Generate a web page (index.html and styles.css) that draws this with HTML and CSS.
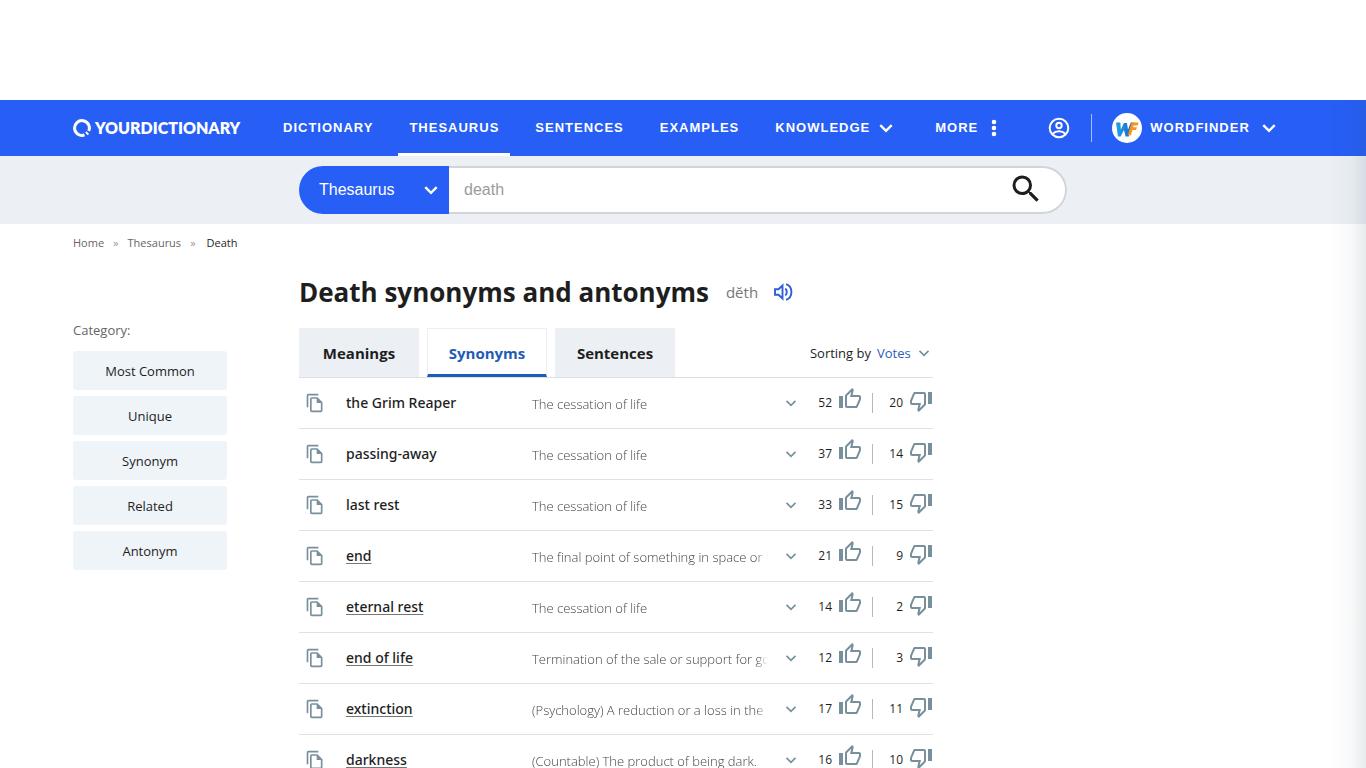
FILE: index.html
```html
<!DOCTYPE html>
<html lang="en">
<head>
<meta charset="utf-8">
<title>Death synonyms and antonyms</title>
<link rel="stylesheet" href="styles.css">
</head>
<body>
<svg class="sprite" aria-hidden="true">
  <symbol id="chevron" viewBox="0 0 14 14"><path d="M2 4.500l5 5 5-5" fill="none" stroke="currentColor" stroke-width="2.100"/></symbol>
  <symbol id="chevron-thin" viewBox="0 0 14 14"><path d="M2.500 4.800L7 9.300l4.500-4.500" fill="none" stroke="currentColor" stroke-width="1.700"/></symbol>
  <symbol id="copy" viewBox="0 0 24 24"><path fill="currentColor" fill-rule="evenodd" d="M16 1H4a2 2 0 0 0-2 2v14h2V3h12V1zM15 5l6 6v10a2 2 0 0 1-2 2H8a2 2 0 0 1-2-2V7a2 2 0 0 1 2-2h7zM8 7v14h11v-9h-5V7H8z"/></symbol>
  <symbol id="up" viewBox="0 0 24 24"><path fill="currentColor" fill-rule="evenodd" d="M9 21h9c.83 0 1.540-.5 1.840-1.220l3.020-7.050c.09-.23.14-.47.14-.73v-2c0-1.100-.9-2-2-2h-6.310l.95-4.570.03-.32c0-.41-.17-.79-.44-1.060L14.170 1 7.580 7.590C7.220 7.950 7 8.450 7 9v10c0 1.100.9 2 2 2zM9 9l4.340-4.340L12 10h9v2l-3 7H9V9zM1 9h4v12H1z"/></symbol>
  <symbol id="down" viewBox="0 0 24 24"><path fill="currentColor" fill-rule="evenodd" d="M15 3H6c-.83 0-1.540.5-1.840 1.220l-3.020 7.050c-.09.23-.14.47-.14.73v2c0 1.100.9 2 2 2h6.310l-.95 4.570-.03.32c0 .41.17.79.44 1.060L9.830 23l6.590-6.590c.36-.36.58-.86.58-1.410V5c0-1.100-.9-2-2-2zm0 12l-4.340 4.340L12 14H3v-2l3-7h9v10zm4-12h4v12h-4z"/></symbol>
</svg>

<div class="ad-slot"></div>

<header class="topbar">
  <div class="container topbar-inner">
    <a class="logo" href="#" aria-label="YourDictionary">
      <svg width="18" height="18" viewBox="0 0 18 18" aria-hidden="true"><path d="M11.500 15.900A7.400 7.400 0 1 1 15.700 12" fill="none" stroke="#fff" stroke-width="3"/><path d="M12.800 13l2.600 2.600" stroke="#fff" stroke-width="1.800"/></svg>
      <span>YOURDICTIONARY</span>
    </a>
    <nav class="nav">
      <a href="#">DICTIONARY</a>
      <a href="#" class="active">THESAURUS</a>
      <a href="#">SENTENCES</a>
      <a href="#">EXAMPLES</a>
      <button type="button">KNOWLEDGE <svg width="16" height="16"><use href="#chevron"/></svg></button>
      <button type="button" class="more">MORE <svg width="6" height="18" viewBox="0 0 6 18" fill="#fff"><circle cx="3" cy="3" r="2.300"/><circle cx="3" cy="9" r="2.300"/><circle cx="3" cy="15" r="2.300"/></svg></button>
    </nav>
    <div class="account">
      <button type="button" class="user" aria-label="Account"><svg width="22" height="22" viewBox="0 0 22 22" fill="none" stroke="#fff" stroke-width="2"><circle cx="11" cy="11" r="9.300"/><circle cx="11" cy="8.500" r="2.700"/><path d="M4.500 17c3.500-3.600 9.500-3.600 13 0"/></svg></button>
      <button type="button" class="wf">
        <svg width="30" height="30" viewBox="0 0 30 30"><defs><linearGradient id="w" x1="0" x2="1"><stop offset="0" stop-color="#1fa5e8"/><stop offset="1" stop-color="#1c62bd"/></linearGradient></defs><circle cx="15" cy="15" r="15" fill="#fff"/><path d="M4 9.500h4.300l.6 7 3-6.500h3l1.100 6.500 2.800-7h3.200l-5.200 14h-3.200l-1.700-6.500-3.200 6.500H5.900z" fill="url(#w)"/><path d="M19.500 9.500h7l-.8 3h-4.200l-.4 1.800h3.800l-.8 2.700h-3.700l-1.500 5.300h-3z" fill="#f8941d"/></svg>
        <span>WORDFINDER</span>
        <svg width="16" height="16"><use href="#chevron"/></svg>
      </button>
    </div>
  </div>
</header>

<div class="searchbar">
  <div class="container">
    <form class="search">
      <div class="scope">
        <select aria-label="Search in"><option>Thesaurus</option><option>Dictionary</option><option>Sentences</option></select>
        <svg width="16" height="16"><use href="#chevron"/></svg>
      </div>
      <input type="text" placeholder="death" aria-label="Search">
      <button type="button" aria-label="Search"><svg width="36" height="36" viewBox="0 0 24 24"><path fill="#1e1e1e" d="M15.500 14h-.79l-.28-.27A6.470 6.470 0 0 0 16 9.500 6.500 6.500 0 1 0 9.500 16c1.610 0 3.090-.59 4.230-1.570l.27.28v.79l5 4.990L20.490 19l-4.990-5zm-6 0a4.500 4.500 0 1 1 0-9 4.500 4.500 0 0 1 0 9z"/></svg></button>
    </form>
  </div>
</div>

<main class="container">
  <nav class="crumbs" aria-label="Breadcrumb"><a href="#">Home</a><i>»</i><a href="#">Thesaurus</a><i>»</i><span>Death</span></nav>
  <div class="columns">
    <aside class="side">
      <p>Category:</p>
      <button type="button">Most Common</button>
      <button type="button">Unique</button>
      <button type="button">Synonym</button>
      <button type="button">Related</button>
      <button type="button">Antonym</button>
    </aside>
    <section class="content">
      <div class="title">
        <h1>Death synonyms and antonyms</h1>
        <span class="pron">dĕth</span>
        <button type="button" aria-label="Listen"><svg width="20" height="20" viewBox="0 0 20 20" fill="none" stroke="#2f5fd6" stroke-width="1.900"><path d="M2 7.200h3.500l4-3.700v13l-4-3.700H2z"/><path d="M12.300 6.500c2 1.600 2 5.400 0 7M13 2.200c7.200 2.200 7.200 13.400 0 15.600"/></svg></button>
      </div>
      <div class="tabs">
        <a href="#">Meanings</a>
        <a href="#" class="active">Synonyms</a>
        <a href="#">Sentences</a>
        <div class="sort"><label for="sort">Sorting by</label><select id="sort"><option>Votes</option><option>A-Z</option></select><svg width="14" height="14"><use href="#chevron-thin"/></svg></div>
      </div>
      <ul class="rows" id="rows"></ul>
    </section>
  </div>
</main>
<script src="rows.js"></script>
</body>
</html>
```
FILE: styles.css
```css
* { box-sizing: border-box; }
body { margin: 0; background: #fff; color: #1e1e1e; font-family: "Open Sans", "Noto Sans", sans-serif; font-size: 13px; overflow: hidden; }
body::after { content: ""; position: fixed; top: 100px; right: 0; bottom: 0; width: 36px; pointer-events: none; background: linear-gradient(to right, rgba(60, 90, 100, 0), rgba(60, 90, 100, .04) 60%, rgba(60, 90, 100, .12)); }
a { color: inherit; text-decoration: none; }
button { padding: 0; border: 0; background: none; color: inherit; font: inherit; cursor: pointer; }
svg { display: block; flex: none; }
.sprite { position: absolute; width: 0; height: 0; }
.container { max-width: 1220px; margin: 0 auto; }
.ad-slot { height: 100px; }

.topbar { background: #265ef6; color: #fff; font: bold 13px/16px "Liberation Sans", Arial, sans-serif; }
.topbar-inner { display: flex; height: 56px; }
.logo { display: flex; align-items: center; gap: 4px; width: 199px; font: 800 16px/20px Lato, sans-serif; }
.nav { display: flex; gap: 14px; letter-spacing: 1px; }
.nav a, .nav button { display: flex; align-items: center; padding: 0 11px; letter-spacing: 1px; border-bottom: 3px solid transparent; border-top: 2px solid transparent; }
.nav .active { border-bottom-color: #fff; }
.nav button { gap: 8px; }
.nav .more { gap: 13px; margin-left: 5px; }
.account { display: flex; align-items: center; margin-left: 40px; }
.user { padding-right: 21px; border-right: 1px solid #a8bffb; height: 28px; }
.wf { display: flex; align-items: center; gap: 8px; margin-left: 20px; letter-spacing: 1px; }
.wf span { padding-right: 3px; }

.searchbar { background: #ecf0f5; padding: 10px 0; }
.search { display: flex; height: 48px; max-width: 768px; margin-left: 226px; border-radius: 24px; background: #fff; font: 16px/20px "Liberation Sans", Arial, sans-serif; }
.scope { display: grid; grid-template-columns: 1fr 26px; align-items: center; width: 150px; border-radius: 24px 0 0 24px; background: #265ef6; color: #fff; }
.scope select { grid-area: 1 / 1 / 2 / 3; height: 48px; padding: 0 20px; appearance: none; border: 0; background: none; color: inherit; font: inherit; }
.scope svg { grid-area: 1 / 2; pointer-events: none; }
.search input { flex: 1; min-width: 0; padding: 0 15px; border: solid #d0d5da; border-width: 2px 0; background: none; font: inherit; outline: 0; }
.search input::placeholder { color: #9b9b9b; }
.search button { display: flex; align-items: center; padding: 0 21px 2px 0; border: 2px solid #d0d5da; border-left: 0; border-radius: 0 24px 24px 0; }

.crumbs { display: flex; gap: 9px; padding-top: 10px; font-size: 11px; line-height: 18px; color: #666; }
.crumbs i { font-style: normal; color: #999; }
.crumbs span { color: #1e1e1e; margin-left: 2px; }
.columns { display: flex; gap: 72px; }
.side { display: flex; flex-direction: column; gap: 6px; width: 154px; padding-top: 68px; }
.side p { margin: 0 0 5px; line-height: 20px; color: #666; }
.side button { height: 39px; border-radius: 3px; background: #eff4f9; }
.content { flex: 1; max-width: 634px; }
.title { display: flex; align-items: center; height: 36px; margin-top: 22px; }
.title h1 { margin: 0; font-size: 26px; line-height: 36px; font-weight: 700; white-space: nowrap; }
.pron { margin: 0 15px 0 17px; font-size: 15px; color: #777; }
.tabs { display: flex; gap: 8px; margin-top: 18px; border-bottom: 1px solid #dcdfe3; }
.tabs a { width: 120px; height: 49px; border: 1px solid #ecf0f5; border-bottom: 0; background: #ecf0f5; font-size: 15px; font-weight: 700; line-height: 49px; text-align: center; }
.tabs .active { background: #fff; color: #1f5cb4; border-bottom: 3px solid #1a5fb4; }
.sort { display: flex; align-items: center; gap: 6px; margin-left: auto; padding-right: 2px; }
.sort select { appearance: none; padding: 0; border: 0; background: none; font: inherit; color: #2a5db8; }
.sort svg, .rows svg { color: #78909c; }

.rows { margin: 0; padding: 0; list-style: none; }
.rows li { display: grid; grid-template-columns: 41px 186px minmax(0, 1fr) 46px 24px 34px 37px 24px; align-items: center; height: 51px; padding-left: 6px; border-bottom: 1px solid #dfe2e5; }
.word { font: 500 14px/20px "Noto Sans", "Open Sans", sans-serif; }
.word a { text-decoration: underline 1px #777; text-underline-offset: 2px; }
.def { padding-top: 2px; overflow: hidden; white-space: nowrap; font-weight: 300; color: #444; -webkit-mask-image: linear-gradient(to right, #000 95%, transparent); mask-image: linear-gradient(to right, #000 95%, transparent); }
.expand { justify-self: center; }
.count { padding-right: 6px; font-size: 12px; line-height: 20px; text-align: right; }
.count.down { border-left: 1px solid #b0bac0; }
.vote { padding-bottom: 9px; }
.vote.down { padding-bottom: 5px; }
```
FILE: rows.js
```js
const rows = [
  ["the Grim Reaper", "The cessation of life", 52, 20, false],
  ["passing-away", "The cessation of life", 37, 14, false],
  ["last rest", "The cessation of life", 33, 15, false],
  ["end", "The final point of something in space or t", 21, 9, true],
  ["eternal rest", "The cessation of life", 14, 2, true],
  ["end of life", "Termination of the sale or support for goo", 12, 3, true],
  ["extinction", "(Psychology) A reduction or a loss in the s", 17, 11, true],
  ["darkness", "(Countable) The product of being dark.", 16, 10, true]
];
const icon = (id, size) => `<svg width="${size}" height="${size}"><use href="#${id}"/></svg>`;
document.getElementById("rows").innerHTML = rows.map(([word, def, up, down, link]) => `
  <li>
    <button type="button" aria-label="Copy">${icon("copy", 20)}</button>
    <span class="word">${link ? `<a href="#">${word}</a>` : word}</span>
    <span class="def">${def}</span>
    <button type="button" class="expand" aria-label="Expand">${icon("chevron-thin", 14)}</button>
    <span class="count">${up}</span>
    <button type="button" class="vote" aria-label="Vote up">${icon("up", 24)}</button>
    <span class="count down">${down}</span>
    <button type="button" class="vote down" aria-label="Vote down">${icon("down", 24)}</button>
  </li>`).join("");
```
